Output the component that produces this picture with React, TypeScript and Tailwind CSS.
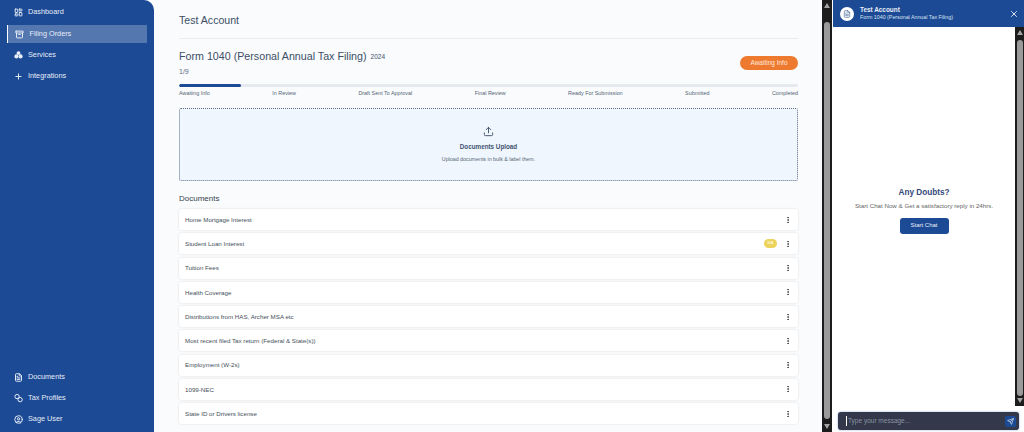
import { LayoutDashboard, Archive, Plus, FileText, CircleUser, EllipsisVertical, Upload, X, Send } from "lucide-react";

const docs = [
  "Home Mortgage Interest",
  "Student Loan Interest",
  "Tuition Fees",
  "Health Coverage",
  "Distributions from HAS, Archer MSA etc",
  "Most recent filed Tax return (Federal & State(s))",
  "Employment (W-2s)",
  "1099-NEC",
  "State ID or Drivers license",
];
const steps = ["Awaiting Info", "In Review", "Draft Sent To Approval", "Final Review", "Ready For Submission", "Submitted", "Completed"];

function ServicesIcon() {
  return (
    <svg width="10" height="10" viewBox="0 0 10 10" fill="currentColor">
      <circle cx="5" cy="2.9" r="2.2" />
      <circle cx="2.7" cy="6.6" r="2.3" />
      <circle cx="7.3" cy="6.6" r="2.3" />
    </svg>
  );
}

function TaxIcon() {
  return (
    <svg width="10" height="10" viewBox="0 0 10 10" fill="none" stroke="currentColor" strokeWidth="1.1">
      <circle cx="3.4" cy="3.4" r="2.4" />
      <circle cx="6.8" cy="6.8" r="2.4" />
    </svg>
  );
}

function NavItem({ icon, label }: { icon: React.ReactNode; label: string }) {
  return (
    <div className="flex h-[21.4px] items-center gap-[5px] pl-[14px] text-[7.3px] font-medium text-[#e6edf8]">
      <span className="flex w-[9px] justify-center">{icon}</span>
      <span>{label}</span>
    </div>
  );
}

function Track({ top, bottom, width }: { top: string; bottom: string; width: string }) {
  return (
    <div className={`flex shrink-0 flex-col items-center bg-[#1c1c1c] ${width}`}>
      <div className="mt-[3px] h-0 w-0 border-x-[3.5px] border-b-[5px] border-x-transparent border-b-[#a3a3a3]" />
      <div className={`w-[6px] flex-1 rounded-full bg-[#9a9a9a] ${top} ${bottom}`} />
      <div className="mb-[3px] h-0 w-0 border-x-[3.5px] border-t-[5px] border-x-transparent border-t-[#a3a3a3]" />
    </div>
  );
}

export default function App() {
  return (
    <div className="flex h-[432px] w-[1024px] overflow-hidden bg-white font-['Liberation_Sans',Arial,sans-serif]">
      <aside className="flex w-[154px] shrink-0 flex-col justify-between rounded-tr-[10px] bg-[#1c4a94] pb-[1.5px]">
        <div className="flex flex-col pt-[2px]">
          <NavItem icon={<LayoutDashboard size={9} strokeWidth={2.6} />} label="Dashboard" />
          <div className="mx-[7px] my-[1.7px] flex h-[18px] items-center gap-[5.5px] border-l-[1.5px] border-white bg-[#5577b0] pl-[7px] text-[7.3px] font-medium text-[#e6edf8]">
            <Archive size={9} strokeWidth={2.6} />
            <span>Filing Orders</span>
          </div>
          <NavItem icon={<ServicesIcon />} label="Services" />
          <NavItem icon={<Plus size={9} strokeWidth={2.6} />} label="Integrations" />
        </div>
        <div className="flex flex-col">
          <NavItem icon={<FileText size={9} strokeWidth={2.6} />} label="Documents" />
          <NavItem icon={<TaxIcon />} label="Tax Profiles" />
          <NavItem icon={<CircleUser size={9} strokeWidth={2.6} />} label="Sage User" />
        </div>
      </aside>

      <main className="flex min-w-0 flex-1 flex-col bg-[#f9fbfd] pl-[25px] pr-[24px]">
        <div className="flex h-[39px] items-center border-b border-[#e9edf1] pt-[3px] text-[10.6px] text-[#3d4f66]">Test Account</div>
        <div className="mt-[10px] flex items-start justify-between">
          <div>
            <div className="flex items-start text-[#3d4f66]">
              <span className="text-[10.7px] leading-[15px]">Form 1040 (Personal Annual Tax Filing)</span>
              <span className="ml-[4px] mt-[2px] text-[6.5px] leading-[11px]">2024</span>
            </div>
            <div className="mt-[3px] text-[7px] leading-[9px] text-[#5b6b7d]">1/9</div>
          </div>
          <div className="mt-[7px] flex h-[14px] w-[58px] items-center justify-center rounded-full bg-[#ee7a30] text-[6.5px] text-[#fde9da]">Awaiting Info</div>
        </div>
        <div className="mt-[8px] h-[3px] overflow-hidden rounded-full bg-[#e6e9ed]">
          <div className="h-full w-[62px] rounded-full bg-[#1c4a94]" />
        </div>
        <div className="mt-[2px] flex justify-between text-[5.4px] leading-[8px] text-[#556575]">
          {steps.map((s) => <span key={s}>{s}</span>)}
        </div>
        <div className="mt-[11px] flex h-[73px] flex-col items-center justify-center rounded-[2px] border border-dotted border-[#5f6f85] bg-[#eff6fd]">
          <Upload size={11} className="text-[#3d4f66]" />
          <div className="mt-[5px] text-[6.3px] font-bold leading-[9px] text-[#3f5273]">Documents Upload</div>
          <div className="mt-[5px] text-[5.3px] leading-[7px] text-[#556575]">Upload documents in bulk &amp; label them.</div>
        </div>
        <div className="mt-[12px] text-[8px] leading-[11px] text-[#36424f]">Documents</div>
        <div className="mt-[5px] flex flex-col gap-[3.25px]">
          {docs.map((d, i) => (
            <div key={d} className="flex h-[21px] items-center justify-between rounded-[2px] bg-white pl-[6px] pr-[6px] text-[6.2px] text-[#444f5a] shadow-[0_0_2px_rgba(0,0,0,0.15)]">
              <span>{d}</span>
              <div className="flex items-center gap-[7px]">
                {i === 1 && <span className="flex h-[9px] w-[13px] items-center justify-center rounded-full bg-[#ecd35c] text-[3.5px] text-white">N/A</span>}
                <EllipsisVertical size={8} strokeWidth={2.6} className="text-[#333]" />
              </div>
            </div>
          ))}
        </div>
      </main>

      <Track top="mt-[14px]" bottom="mb-[5px]" width="w-[10px]" />
      <div className="w-[1px] bg-white" />

      <div className="flex w-[191px] shrink-0 flex-col bg-white">
        <div className="flex h-[27px] shrink-0 items-center bg-[#1c4a94] pl-[7px] pr-[5px]">
          <div className="flex h-[14px] w-[14px] items-center justify-center rounded-full bg-white">
            <FileText size={8} className="text-[#4c6a9c]" />
          </div>
          <div className="ml-[6px] flex-1">
            <div className="text-[6.4px] font-bold leading-[8px] text-[#eaf0fa]">Test Account</div>
            <div className="text-[5.3px] leading-[7px] text-[#dbe4f3]">Form 1040 (Personal Annual Tax Filing)</div>
          </div>
          <X size={10} className="text-white" />
        </div>
        <div className="flex min-h-0 flex-1">
          <div className="flex flex-1 flex-col items-center justify-center pb-[13px]">
            <div className="text-[8.2px] font-bold leading-[11px] text-[#33467a]">Any Doubts?</div>
            <div className="mt-[3px] text-[6.2px] leading-[9px] text-[#666]">Start Chat Now &amp; Get a satisfactory reply in 24hrs.</div>
            <div className="mt-[8px] flex h-[16px] w-[49px] items-center justify-center rounded-[3px] bg-[#1c4a94] text-[6px] font-medium text-[#eaf0fa]">Start Chat</div>
          </div>
          <Track top="mt-[5px]" bottom="mb-[2px]" width="w-[9px]" />
        </div>
        <div className="flex h-[26px] shrink-0 items-start px-[5px] pt-[6px]">
          <div className="flex h-[18px] flex-1 items-center justify-between rounded-[3px] bg-[#33394a] pl-[8px] pr-[3px] shadow-[0_0_2px_#7ea4e0]">
            <span className="border-l border-white pl-[1px] text-[6.5px] text-[#8b94a3]">Type your message...</span>
            <span className="flex h-[11px] w-[11px] items-center justify-center rounded-[2px] bg-[#1c4a94]">
              <Send size={7} className="text-white" />
            </span>
          </div>
        </div>
      </div>
    </div>
  );
}
